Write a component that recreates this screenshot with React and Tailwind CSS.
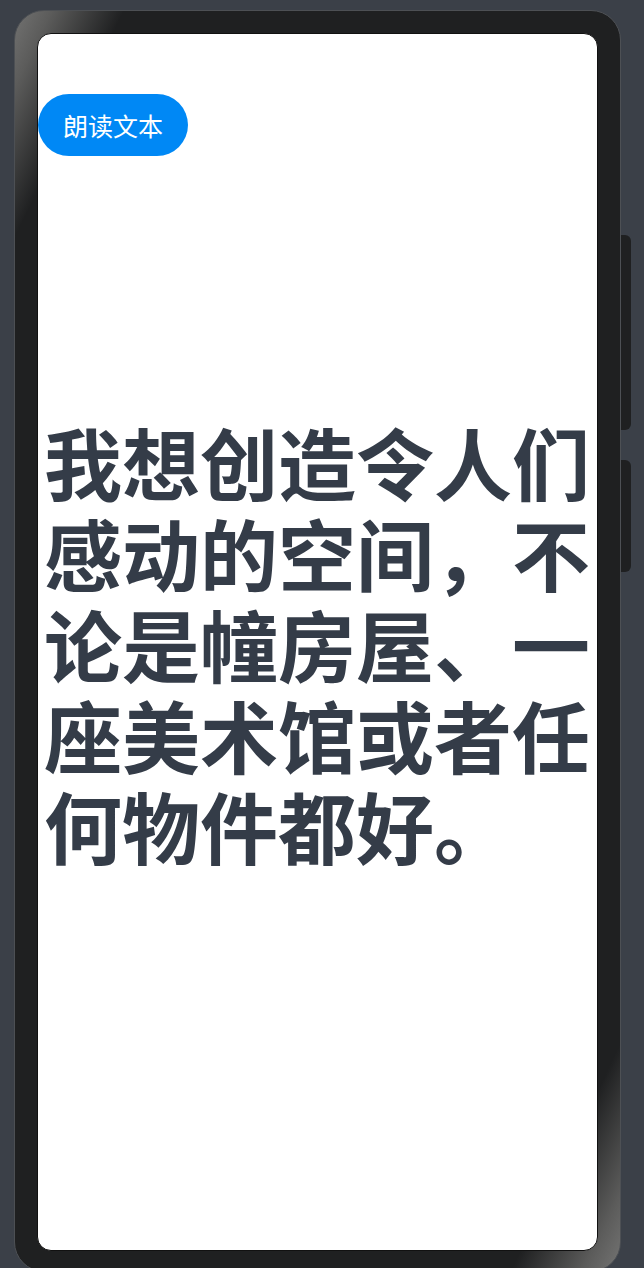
const SideKey = ({ className }) => (
  <div className={`w-[10px] rounded-r-[6px] bg-[#1f2021] ${className}`} />
)

const App = () => {
  return (
    <div className="flex h-[1268px] w-[644px] overflow-hidden bg-[#3b4048] pl-[14px] pt-[10px] font-['Noto_Sans_CJK_SC',sans-serif]">
      <div className="h-[1262px] w-[607px] shrink-0 rounded-[30px] border border-[#4d5054] bg-[linear-gradient(to_bottom_right,#727271_0%,#5c5c5b_3%,#1f2021_9%,#1f2021_91%,#5c5c5b_97%,#747473_100%)] p-[22px]">
        <div className="flex h-[1218px] w-full flex-col items-start rounded-[14px] border border-[#111] bg-white">
          <button className="mt-[60px] h-[62px] w-[150px] rounded-full bg-[#0088f5] text-[25px] font-normal leading-none text-white">
            朗读文本
          </button>
          <p className="mt-[260px] px-[6px] text-[78px] font-bold leading-[91px] text-[#343c48]">
            我想创造令人们感动的空间，不论是幢房屋、一座美术馆或者任何物件都好。
          </p>
        </div>
      </div>
      <div className="flex flex-col">
        <SideKey className="mt-[225px] h-[195px]" />
        <SideKey className="mt-[30px] h-[112px]" />
      </div>
    </div>
  )
}

export default App
